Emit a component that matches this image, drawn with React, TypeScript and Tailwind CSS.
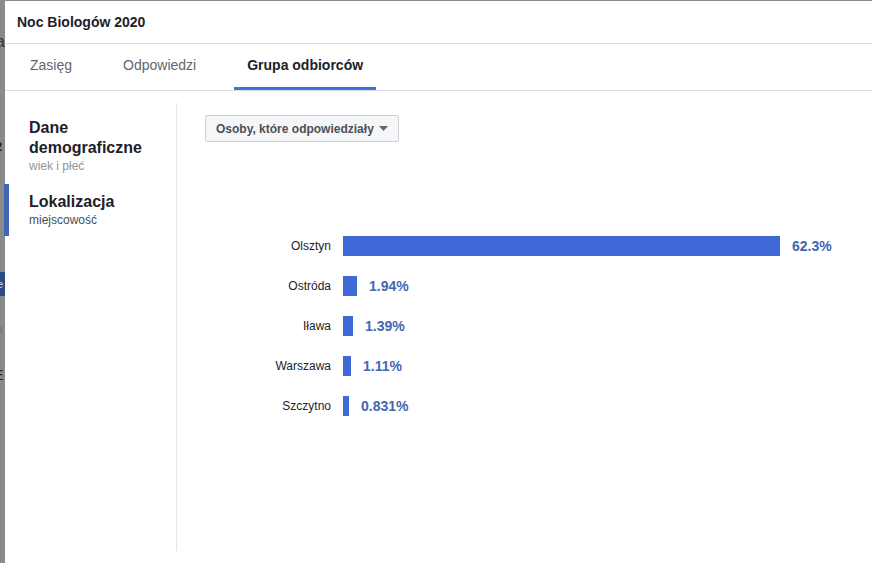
import React from "react";

const rows = [
  { label: "Olsztyn", pct: "62.3%", w: 437 },
  { label: "Ostróda", pct: "1.94%", w: 14 },
  { label: "Iława", pct: "1.39%", w: 10 },
  { label: "Warszawa", pct: "1.11%", w: 8 },
  { label: "Szczytno", pct: "0.831%", w: 6 },
];

export default function App() {
  return (
    <div
      className="w-[872px] h-[563px] flex bg-[#8a8a8a] overflow-hidden"
      style={{ fontFamily: '"Liberation Sans", Arial, sans-serif' }}
    >
      {/* dimmed page behind the dialog */}
      <div className="relative w-[5px] shrink-0 overflow-hidden text-[#222]">
        <span className="absolute left-[-4px] top-[30px] text-[16px] text-[#333]">a</span>
        <span className="absolute left-[-5px] top-[137px] text-[13px] font-bold">2</span>
        <div className="absolute left-0 top-[272px] w-[5px] h-[24px] bg-[#2d4a86]" />
        <span className="absolute left-[-3px] top-[276px] text-[11px] text-[#cfd7e6]">e</span>
        <span className="absolute left-[-4px] top-[320px] text-[12px] text-[#777]">a</span>
        <span className="absolute left-[-6px] top-[365px] text-[14px]">E</span>
      </div>

      {/* dialog */}
      <div className="flex-1 mt-px bg-white flex flex-col">
        <div className="h-[43px] flex items-center pl-3 border-b border-[#dddfe2]">
          <span className="text-[14px] font-bold text-[#1d2129]">Noc Biologów 2020</span>
        </div>

        <div className="h-[47px] flex items-stretch pl-3 gap-[25px] border-b border-[#dddfe2]">
          <div className="px-[13px] pb-[3px] flex items-center text-[14px] text-[#606770]">Zasięg</div>
          <div className="px-[13px] pb-[3px] flex items-center text-[14px] text-[#606770]">Odpowiedzi</div>
          <div className="relative px-[13px] pb-[3px] flex items-center text-[14px] font-bold text-[#1d2129]">
            Grupa odbiorców
            <div className="absolute left-0 right-0 bottom-0 h-[3px] bg-[#3b74dd]" />
          </div>
        </div>

        <div className="flex-1 flex">
          <div className="w-[172px] shrink-0 mt-3 mb-3 border-r border-[#e5e6e9] flex flex-col">
            <div className="pl-6 pt-[15px] pb-[10px]">
              <div className="text-[16px] leading-[20px] font-bold text-[#1d2129]">Dane</div>
              <div className="text-[16px] leading-[20px] font-bold text-[#1d2129]">demograficzne</div>
              <div className="text-[12px] leading-[16px] text-[#90949c]">wiek i płeć</div>
            </div>
            <div className="relative pl-6 pt-2 pb-2">
              <div className="absolute left-[-1px] top-0 bottom-0 w-[5px] bg-[#4267b2]" />
              <div className="text-[16px] leading-[20px] font-bold text-[#1d2129]">Lokalizacja</div>
              <div className="text-[12px] leading-[16px] text-[#4b4f56]">miejscowość</div>
            </div>
          </div>

          <div className="flex-1 pl-7 pt-6">
            <div className="inline-flex items-center h-[27px] px-[10px] bg-[#f5f6f7] border border-[#ccd0d5] rounded-[2px] text-[12px] font-bold text-[#4b4f56]">
              Osoby, które odpowiedziały
              <svg width="9" height="5" viewBox="0 0 9 5" className="ml-[5px]">
                <path d="M0 0 L9 0 L4.5 5 Z" fill="#606770" />
              </svg>
            </div>

            <div className="mt-[94px] flex flex-col gap-[20px]">
              {rows.map((r) => (
                <div key={r.label} className="flex items-center h-[20px]">
                  <div className="w-[126px] text-right text-[12px] text-[#1d2129]">{r.label}</div>
                  <div className="ml-3 h-[20px] bg-[#3e69d6]" style={{ width: r.w }} />
                  <div className="ml-3 text-[14px] font-bold text-[#4267b2]">{r.pct}</div>
                </div>
              ))}
            </div>
          </div>
        </div>
      </div>
    </div>
  );
}
